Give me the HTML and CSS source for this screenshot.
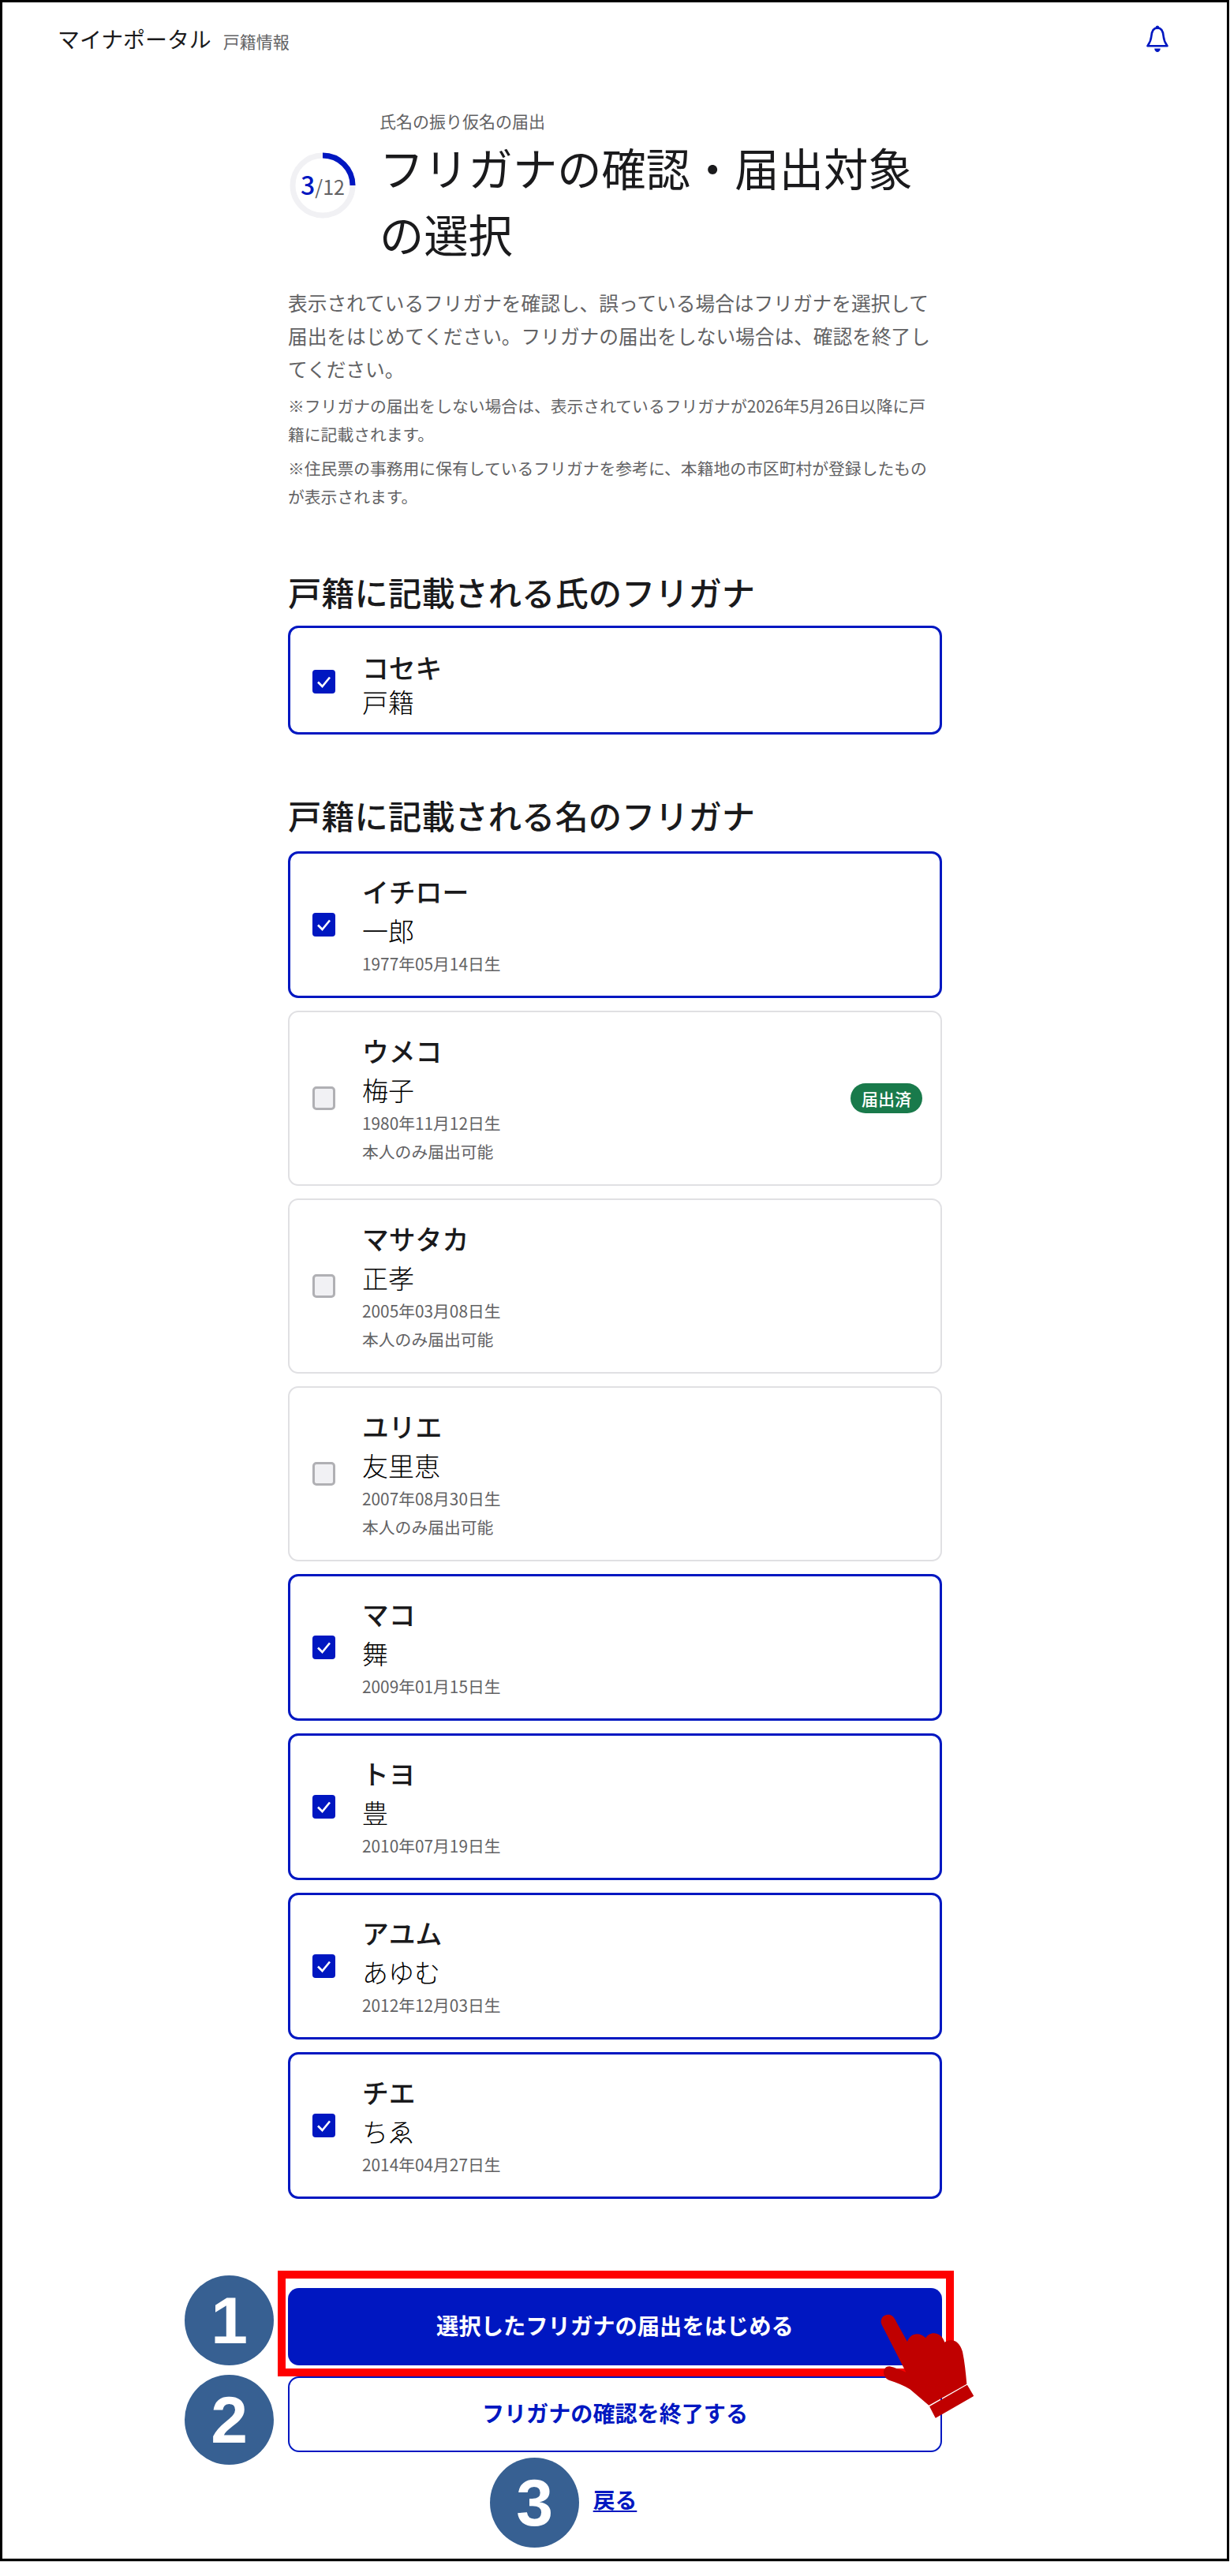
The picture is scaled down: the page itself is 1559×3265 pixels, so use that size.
FILE: index.html
```html
<!DOCTYPE html>
<html lang="ja">
<head>
<meta charset="utf-8">
<title>フリガナの確認・届出対象の選択</title>
<link rel="stylesheet" href="styles.css">
</head>
<body>
<div class="frame">
  <header class="top">
    <div class="brand"><span class="brand-name">マイナポータル</span><span class="brand-sub">戸籍情報</span></div>
    <svg class="bell" viewBox="0 0 28 34" aria-hidden="true"><circle cx="14" cy="2.6" r="2.2" fill="#0017c1"/><path d="M14 3.4C8.6 3.4 6.8 8 6.3 14C5.9 19 3.8 23 1.5 26.2H26.5C24.2 23 22.1 19 21.7 14C21.2 8 19.4 3.4 14 3.4Z" fill="none" stroke="#0017c1" stroke-width="2.6" stroke-linejoin="round"/><path d="M10.2 29.6H17.8C17.6 32.6 15.8 34 14 34C12.2 34 10.4 32.6 10.2 29.6Z" fill="#0017c1"/></svg>
  </header>
  <main class="content">
    <div class="page-head">
      <div class="progress">
        <svg class="ring" viewBox="0 0 88 88" aria-hidden="true"><circle cx="44" cy="44" r="38" fill="none" stroke="#f1f1f4" stroke-width="7"/><path d="M44 6A38 38 0 0 1 82 44" fill="none" stroke="#0017c1" stroke-width="7"/></svg>
        <div class="progress-text"><span class="progress-now">3</span><span class="progress-all">/12</span></div>
      </div>
      <div class="head-text">
        <p class="eyebrow">氏名の振り仮名の届出</p>
        <h1 class="title">フリガナの確認・届出対象の選択</h1>
      </div>
    </div>
    <p class="lead">表示されているフリガナを確認し、誤っている場合はフリガナを選択して届出をはじめてください。フリガナの届出をしない場合は、確認を終了してください。</p>
    <p class="note">※フリガナの届出をしない場合は、表示されているフリガナが2026年5月26日以降に戸籍に記載されます。</p>
    <p class="note note-next">※住民票の事務用に保有しているフリガナを参考に、本籍地の市区町村が登録したものが表示されます。</p>

    <h2 class="section-title">戸籍に記載される氏のフリガナ</h2>
    <div class="card card-surname">
      <span class="box box-on"><svg viewBox="0 0 29 30" aria-hidden="true"><path d="M7 15.5L12.5 21L22 9.5" fill="none" stroke="#fff" stroke-width="2.6"/></svg></span>
      <div class="person"><div class="kana">コセキ</div><div class="kanji">戸籍</div></div>
    </div>

    <h2 class="section-title section-second">戸籍に記載される名のフリガナ</h2>
    <div class="card-list">
      <div class="card">
        <span class="box box-on"><svg viewBox="0 0 29 30" aria-hidden="true"><path d="M7 15.5L12.5 21L22 9.5" fill="none" stroke="#fff" stroke-width="2.6"/></svg></span>
        <div class="person"><div class="kana">イチロー</div><div class="kanji">一郎</div><div class="meta">1977年05月14日生</div></div>
      </div>
      <div class="card card-off">
        <span class="box box-off"></span>
        <div class="person"><div class="kana">ウメコ</div><div class="kanji">梅子</div><div class="meta">1980年11月12日生</div><div class="meta">本人のみ届出可能</div></div>
        <span class="badge">届出済</span>
      </div>
      <div class="card card-off">
        <span class="box box-off"></span>
        <div class="person"><div class="kana">マサタカ</div><div class="kanji">正孝</div><div class="meta">2005年03月08日生</div><div class="meta">本人のみ届出可能</div></div>
      </div>
      <div class="card card-off">
        <span class="box box-off"></span>
        <div class="person"><div class="kana">ユリエ</div><div class="kanji">友里恵</div><div class="meta">2007年08月30日生</div><div class="meta">本人のみ届出可能</div></div>
      </div>
      <div class="card">
        <span class="box box-on"><svg viewBox="0 0 29 30" aria-hidden="true"><path d="M7 15.5L12.5 21L22 9.5" fill="none" stroke="#fff" stroke-width="2.6"/></svg></span>
        <div class="person"><div class="kana">マコ</div><div class="kanji">舞</div><div class="meta">2009年01月15日生</div></div>
      </div>
      <div class="card">
        <span class="box box-on"><svg viewBox="0 0 29 30" aria-hidden="true"><path d="M7 15.5L12.5 21L22 9.5" fill="none" stroke="#fff" stroke-width="2.6"/></svg></span>
        <div class="person"><div class="kana">トヨ</div><div class="kanji">豊</div><div class="meta">2010年07月19日生</div></div>
      </div>
      <div class="card">
        <span class="box box-on"><svg viewBox="0 0 29 30" aria-hidden="true"><path d="M7 15.5L12.5 21L22 9.5" fill="none" stroke="#fff" stroke-width="2.6"/></svg></span>
        <div class="person"><div class="kana">アユム</div><div class="kanji">あゆむ</div><div class="meta">2012年12月03日生</div></div>
      </div>
      <div class="card">
        <span class="box box-on"><svg viewBox="0 0 29 30" aria-hidden="true"><path d="M7 15.5L12.5 21L22 9.5" fill="none" stroke="#fff" stroke-width="2.6"/></svg></span>
        <div class="person"><div class="kana">チエ</div><div class="kanji">ちゑ</div><div class="meta">2014年04月27日生</div></div>
      </div>
    </div>

    <div class="actions">
      <div class="btn btn-primary">選択したフリガナの届出をはじめる</div>
      <div class="btn btn-outline">フリガナの確認を終了する</div>
      <a class="back" href="#">戻る</a>
    </div>
  </main>

  <div class="red-box"></div>
  <div class="step step-1">1</div>
  <div class="step step-2">2</div>
  <div class="step step-3">3</div>
  <svg class="hand" viewBox="0 0 660 660" aria-hidden="true">
    <path d="M232 258C222 232 250 212 272 226C280 232 284 240 288 248L330 324C338 296 372 282 400 310C412 284 458 282 472 326C500 308 528 322 540 362C548 400 552 440 556 485L412 566L340 505C318 490 290 480 260 470C232 458 234 418 262 418C282 422 304 432 325 440Z" fill="#c00000"/>
    <path d="M417 571L557 491L580 530L438 612Z" fill="#c00000" stroke="#c00000" stroke-width="4" stroke-linejoin="round"/>
  </svg>
</div>
</body>
</html>
```

FILE: styles.css
```css
* { box-sizing: border-box; }
html, body { margin: 0; padding: 0; background: #fff; }
body {
  font-family: "Noto Sans CJK JP", "Noto Sans", sans-serif;
  color: #1a1a1c;
  height: 3265px;
  overflow: hidden;
}
p, h1, h2 { margin: 0; }

.frame {
  position: relative;
  width: 1558px;
  height: 3246px;
  border: 3px solid #000;
  background: #fff;
  box-shadow: 0 1px 0 #bbb;
}

.top {
  height: 97px;
  padding: 0 74px 0 70px;
  display: flex;
  justify-content: space-between;
  align-items: flex-start;
}
.brand { display: flex; align-items: baseline; gap: 15px; padding-top: 24px; }
.brand-name { font-size: 27.9px; line-height: 44px; color: #1a1a1c; }
.brand-sub { font-size: 21px; line-height: 44px; color: #626264; }
.bell { width: 28px; height: 34px; margin-top: 29px; }

.content { width: 829px; margin-left: 362px; }

.page-head { display: flex; align-items: center; gap: 28px; height: 202px; margin-top: 36px; }
.progress { position: relative; width: 88px; height: 88px; flex: none; margin-bottom: 5px; }
.ring { display: block; width: 88px; height: 88px; }
.progress-text {
  position: absolute; inset: 0;
  display: flex; align-items: baseline; justify-content: center;
  line-height: 84px;
}
.progress-now { font-size: 32px; font-weight: 500; color: #0017c1; }
.progress-all { font-size: 25px; color: #626264; }
.head-text { flex: 1; min-width: 0; }
.eyebrow { font-size: 21px; line-height: 34px; color: #626264; }
.title { font-size: 56.3px; line-height: 84px; font-weight: 400; color: #1a1a1c; }

.lead { margin-top: 24px; font-size: 24.7px; line-height: 42px; color: #626264; }
.note { margin-top: 9px; max-width: 812px; font-size: 20.8px; line-height: 35.5px; color: #626264; }
.note-next { margin-top: 8px; }

.section-title { margin-top: 73px; font-size: 42.3px; line-height: 60px; font-weight: 500; color: #1a1a1c; }
.section-second { margin-top: 72px; }

.card {
  display: flex;
  align-items: center;
  margin-top: 14px;
  padding: 23px 22px 23px 28px;
  border: 3px solid #0017c1;
  border-radius: 13px;
  background: #fff;
}
.card-list { display: flex; flex-direction: column; gap: 16px; margin-top: 16px; }
.card-list .card { margin-top: 0; }
.card-off { border: 2px solid #e0e0e3; padding: 24px 23px 24px 29px; }
.card-surname { margin-top: 13px; padding-top: 25px; padding-bottom: 21px; }
.card-surname .kanji { line-height: 36px; }

.box { flex: none; display: block; width: 29px; height: 30px; border-radius: 4px; }
.box svg { display: block; width: 29px; height: 30px; }
.box-on { background: #0017c1; }
.box-off { background: #f1f1f4; border: 3px solid #b0b0b4; border-radius: 5px; }

.person { flex: 1; min-width: 0; margin-left: 34px; }
.kana { font-size: 33.8px; line-height: 50px; font-weight: 500; color: #1a1a1c; }
.kanji { font-size: 33px; line-height: 48px; font-weight: 300; color: #000; }
.meta { font-size: 20.8px; line-height: 36px; color: #626264; }

.badge {
  flex: none;
  width: 91px; height: 38px;
  border-radius: 19px;
  background: #197a4b;
  color: #fff;
  font-size: 21px; font-weight: 500; line-height: 38px;
  text-align: center;
}

.actions { margin-top: 113px; display: flex; flex-direction: column; align-items: center; }
.btn {
  width: 100%;
  display: flex; align-items: center; justify-content: center;
  border-radius: 14px;
  font-weight: 700;
  padding-bottom: 6px;
}
.btn-primary { height: 98px; background: #0017c1; color: #fff; font-size: 28.3px; }
.btn-outline { height: 96px; margin-top: 14px; border: 2px solid #0017c1; background: #fff; color: #0017c1; font-size: 28.1px; }
.back {
  margin-top: 38px;
  font-size: 27.8px; line-height: 42px; font-weight: 700;
  color: #0017c1;
  text-decoration: underline;
  text-underline-offset: 3px;
}

.red-box {
  position: absolute; left: 349px; top: 2875px;
  width: 857px; height: 134px;
  border: 10px solid #f00;
}
.step {
  position: absolute;
  width: 113px; height: 114px;
  border-radius: 50%;
  background: #376092;
  color: #fff;
  font-family: "Liberation Sans", sans-serif;
  font-size: 84px; font-weight: 700; line-height: 114px;
  text-align: center;
}
.step-1 { left: 231px; top: 2881px; }
.step-2 { left: 231px; top: 3007px; }
.step-3 { left: 618px; top: 3112px; }
.hand { position: absolute; left: 1037px; top: 2857px; width: 220px; height: 220px; }
```
